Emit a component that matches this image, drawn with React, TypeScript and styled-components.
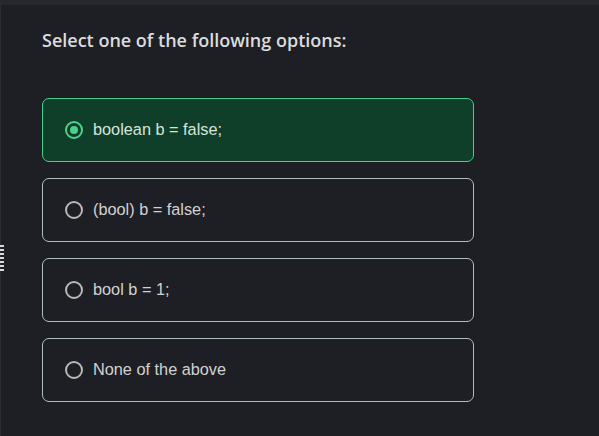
import React, { useState } from "react";
import styled, { createGlobalStyle } from "styled-components";

const Global = createGlobalStyle`
  html, body { margin: 0; padding: 0; background: #1e1f24; }
  #root { min-height: 436px; }
`;

const Page = styled.div`
  position: relative;
  width: 599px;
  height: 436px;
  box-sizing: border-box;
  background: #1e1f24;
  border-top: 5px solid #26282d;
  border-left: 1px solid #2a2c31;
  padding: 22px 0 0 41px;
`;

const Grip = styled.div`
  position: absolute;
  left: -1px;
  top: 240px;
  width: 4px;
  height: 28px;
  background: repeating-linear-gradient(to bottom, #d8d8d8 0 2px, transparent 2px 4px);
`;

const Heading = styled.h2`
  margin: 0 0 45px 0;
  font-family: "Open Sans", "Noto Sans", sans-serif;
  font-weight: 600;
  font-size: 18px;
  line-height: 26px;
  color: #dcdcdc;
`;

const List = styled.div`
  display: flex;
  flex-direction: column;
  gap: 16px;
  width: 432px;
`;

const Option = styled.label<{ $selected: boolean }>`
  display: flex;
  align-items: center;
  gap: 10px;
  height: 64px;
  box-sizing: border-box;
  padding: 0 0 1px 22px;
  border-radius: 7px;
  border: 1px solid ${(p) => (p.$selected ? "#43d088" : "#aebfbf")};
  background: ${(p) => (p.$selected ? "#0f3f28" : "transparent")};
  cursor: pointer;
  font-family: "Liberation Sans", Arial, sans-serif;
  font-size: 16.3px;
  color: ${(p) => (p.$selected ? "#d6e4dc" : "#d2d2d2")};
`;

const Radio = styled.span<{ $selected: boolean }>`
  width: 18px;
  height: 18px;
  box-sizing: border-box;
  border-radius: 50%;
  border: 2px solid ${(p) => (p.$selected ? "#4fd08f" : "#b8b8b8")};
  display: flex;
  align-items: center;
  justify-content: center;
  &::after {
    content: "";
    width: 8px;
    height: 8px;
    border-radius: 50%;
    background: ${(p) => (p.$selected ? "#4fd08f" : "transparent")};
  }
`;

const options = ["boolean b = false;", "(bool) b = false;", "bool b = 1;", "None of the above"];

export default function App() {
  const [sel, setSel] = useState(0);
  return (
    <>
      <Global />
      <Page>
        <Grip />
        <Heading>Select one of the following options:</Heading>
        <List>
          {options.map((o, i) => (
            <Option key={o} $selected={sel === i} onClick={() => setSel(i)}>
              <Radio $selected={sel === i} />
              {o}
            </Option>
          ))}
        </List>
      </Page>
    </>
  );
}
